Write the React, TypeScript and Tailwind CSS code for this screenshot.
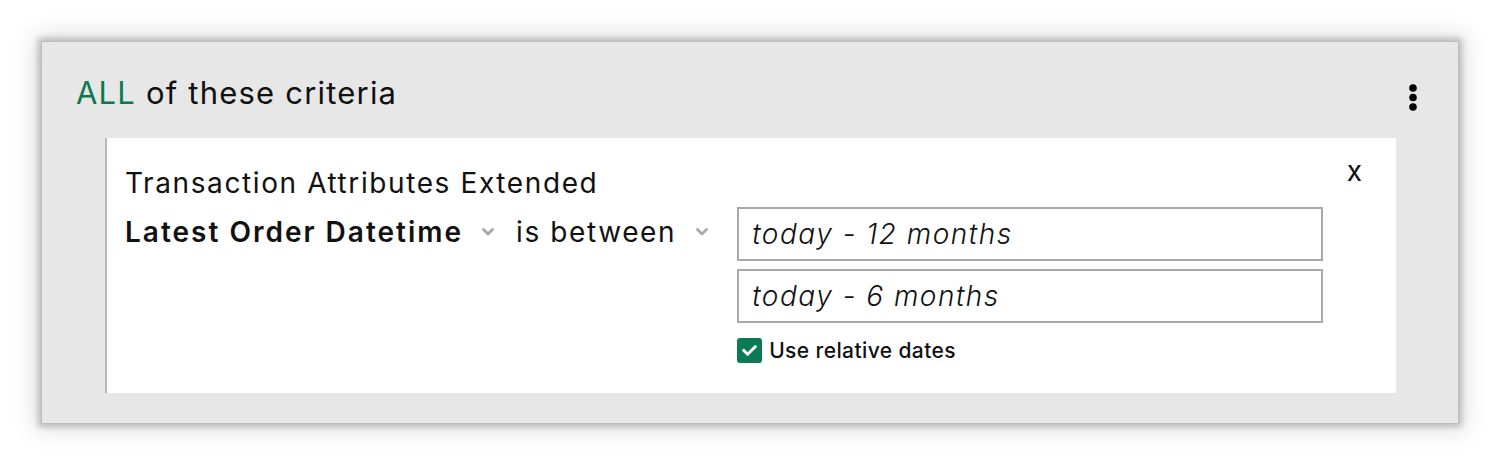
import { FaCheck } from "react-icons/fa";

function Chevron() {
    return (
        <svg width="12" height="8" viewBox="0 0 12 8" className="shrink-0">
            <path d="M1.5 1.5 L6 6 L10.5 1.5" fill="none" stroke="#a8a8a8" strokeWidth="2.8" strokeLinecap="round" strokeLinejoin="round" />
        </svg>
    );
}

function Kebab() {
    return (
        <svg width="8" height="28" viewBox="0 0 8 28" className="mt-[6px]">
            <circle cx="4" cy="4" r="3.8" fill="#000" />
            <circle cx="4" cy="13.5" r="3.8" fill="#000" />
            <circle cx="4" cy="23" r="3.8" fill="#000" />
        </svg>
    );
}

function App() {
    return (
        <div className="min-h-screen bg-white pt-[42px] pl-[42px] font-['Inter',sans-serif] text-[#111]">
            <div className="w-[1416px] h-[381px] bg-[#e7e7e7] pt-[36px] shadow-[0_0_0_1px_#bdbdbd,0_0_6px_4px_rgba(0,0,0,0.2),0_0_22px_8px_rgba(0,0,0,0.12)]">
                <div className="flex items-start justify-between pl-[34px] pr-[41px] h-[30px]">
                    <h2 className="text-[31px] leading-[30px] font-normal tracking-[1.2px]">
                        <span className="text-[#0b7a50]">ALL</span> of these criteria
                    </h2>
                    <Kebab />
                </div>

                <div className="mt-[30px] ml-[63px] mr-[62px] h-[255px] bg-white border-l-2 border-[#b8b8b8] flex pl-[18px] pr-[34px] pt-[19px]">
                    <div className="flex-1 pt-[12px]">
                        <div className="text-[28px] leading-[28px] font-normal tracking-[1.6px]">
                            Transaction Attributes Extended
                        </div>
                        <div className="mt-[10px] flex items-start">
                            <div className="h-[54px] pb-[4px] flex items-center gap-[19px]">
                                <span className="text-[28px] font-semibold tracking-[2px]">Latest Order Datetime</span>
                                <Chevron />
                            </div>
                            <div className="h-[54px] pb-[4px] flex items-center gap-[20px] ml-[22px]">
                                <span className="text-[28px] font-normal tracking-[1.6px]">is between</span>
                                <Chevron />
                            </div>
                            <div className="ml-[29px] flex flex-col w-[586px]">
                                <div className="h-[54px] border-2 border-[#a9a9a9] flex items-center px-[13px] text-[28px] italic font-light tracking-[1.5px]">
                                    today - 12 months
                                </div>
                                <div className="mt-[8px] h-[54px] border-2 border-[#a9a9a9] flex items-center px-[13px] text-[28px] italic font-light tracking-[1.5px]">
                                    today - 6 months
                                </div>
                                <label className="mt-[15px] flex items-center gap-[7px]">
                                    <span className="w-[25px] h-[25px] rounded-[3px] bg-[#0b7a55] flex items-center justify-center">
                                        <FaCheck className="text-white w-[15px] h-[15px]" />
                                    </span>
                                    <span className="text-[21px] leading-[25px] font-medium tracking-[0.4px]">Use relative dates</span>
                                </label>
                            </div>
                        </div>
                    </div>
                    <button className="self-start text-[28px] leading-[28px] font-normal">x</button>
                </div>
            </div>
        </div>
    );
}

export default App;
